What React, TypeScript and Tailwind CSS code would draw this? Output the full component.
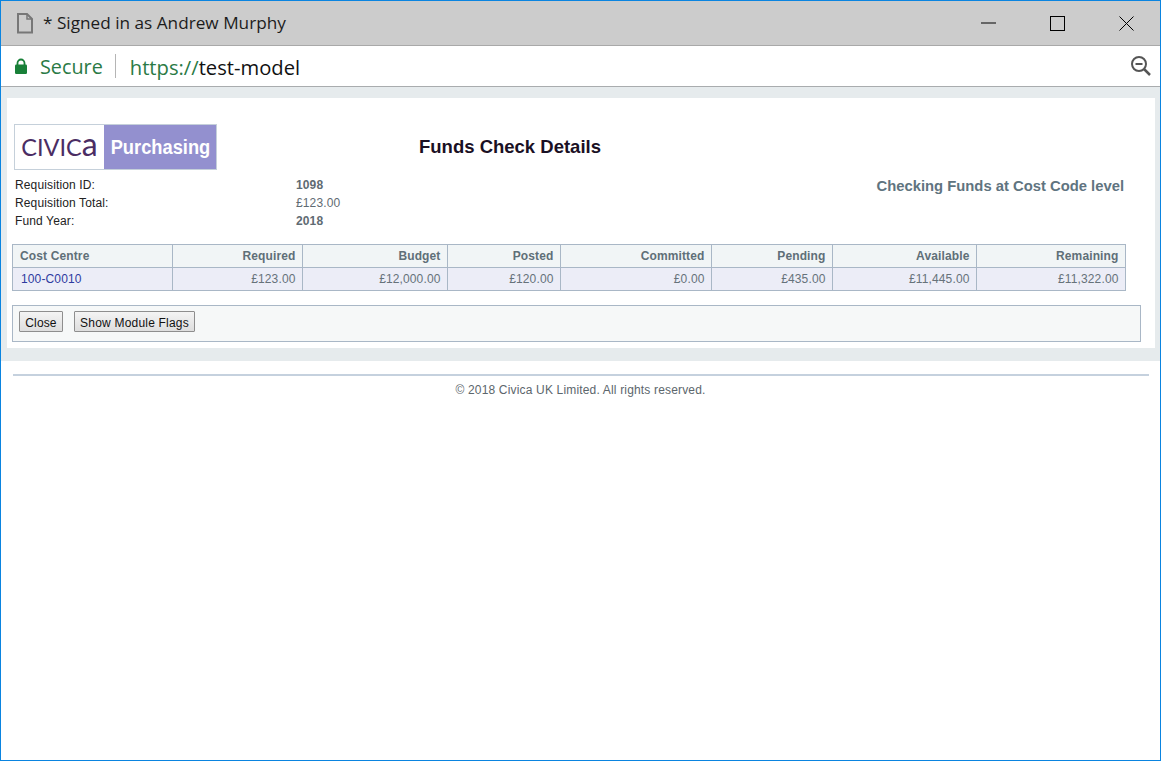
const sys = "font-['Open_Sans','Noto_Sans',sans-serif]";
const cols = [
  { w: 'w-[159px]', h: 'Cost Centre', v: '100-C0010', left: true },
  { w: 'w-[130px]', h: 'Required', v: '£123.00' },
  { w: 'w-[145px]', h: 'Budget', v: '£12,000.00' },
  { w: 'w-[113px]', h: 'Posted', v: '£120.00' },
  { w: 'w-[151px]', h: 'Committed', v: '£0.00' },
  { w: 'w-[121px]', h: 'Pending', v: '£435.00' },
  { w: 'w-[144px]', h: 'Available', v: '£11,445.00' },
  { w: 'w-[149px]', h: 'Remaining', v: '£11,322.00' },
];

function Row({ label, value, bold }: { label: string; value: string; bold?: boolean }) {
  return (
    <div className="flex h-[18px] items-center">
      <span className="w-[281px] text-[#222]">{label}</span>
      <span className={bold ? 'font-bold text-[#5f6b73]' : 'text-[#5f6b73]'}>{value}</span>
    </div>
  );
}

export default function App() {
  return (
    <div className="flex h-[761px] w-[1161px] flex-col overflow-hidden border border-[#0a84e0] bg-white font-['Liberation_Sans',Arial,sans-serif] text-[12px] tracking-[0.13px]">
      <div className="flex h-[45px] shrink-0 items-center border-b border-[#a9a9a9] bg-[#cccccc] tracking-normal">
        <svg width="18" height="22" viewBox="0 0 18 22" fill="none" stroke="#777" strokeWidth="2" className="ml-[15px]">
          <path d="M2 2h9l5 5v13.500H2z" />
          <path d="M11 2v5h5" strokeWidth="1.500" />
        </svg>
        <span className={`ml-[9px] text-[17.2px] text-[#1c1c1c] ${sys}`}>* Signed in as Andrew Murphy</span>
        <div className="ml-auto flex items-center">
          <svg width="15" height="2" className="mr-[54px]"><path d="M0 1h15" stroke="#000" strokeWidth="1" /></svg>
          <svg width="15" height="15" className="mr-[54px]"><rect x="0.500" y="0.500" width="14" height="14" fill="none" stroke="#000" /></svg>
          <svg width="15" height="15" className="mr-[26px]"><path d="M0.500 0.500l14 14M14.500 0.500l-14 14" stroke="#000" /></svg>
        </div>
      </div>

      <div className="flex h-[41px] shrink-0 items-center border-b border-[#a9acae] bg-white tracking-normal">
        <svg width="14" height="17" viewBox="0 0 14 17" className="ml-[13px]">
          <path d="M3.500 7V5a3.500 3.500 0 0 1 7 0v2" fill="none" stroke="#188038" strokeWidth="1.800" />
          <rect x="1" y="6.500" width="12" height="9.500" rx="1.200" fill="#188038" />
        </svg>
        <span className={`ml-[12px] pt-[2px] text-[19.8px] text-[#2a7a45] ${sys}`}>Secure</span>
        <div className="ml-[12px] h-[24px] w-px bg-[#b5b5b5]" />
        <span className={`ml-[14px] pt-[2px] text-[20.2px] ${sys}`}>
          <span className="text-[#2a7a45]">https://</span>
          <span className="text-[#111]">test-model</span>
        </span>
        <svg width="22" height="22" viewBox="0 0 22 22" fill="none" stroke="#555" className="ml-auto mr-[8px]">
          <circle cx="9" cy="9" r="7" strokeWidth="2" />
          <path d="M5.500 9h7" strokeWidth="2" />
          <path d="M14 14l6 6" strokeWidth="2.500" />
        </svg>
      </div>

      <div className="h-[274px] shrink-0 bg-[#e6ebed] pl-[6px] pt-[11px] pr-[5px]">
        <div className="h-[250px] bg-white pl-[5px] pr-[14px] pt-[26px]">
          <div className="relative flex h-[46px] items-start pl-[2px]">
            <div className="flex h-[46px] w-[203px] border border-[#c5d0da]">
              <div className="flex w-[89px] items-baseline justify-center bg-white pt-[5px] font-['Lato',sans-serif] text-[23.5px] leading-[28px] tracking-normal text-[#4b2d63]">
                CIVIC<span className="text-[32px] leading-[28px]">a</span>
              </div>
              <div className="flex flex-1 items-center justify-center bg-[#9390cf] text-[20px] font-bold tracking-normal text-white">
                <span className="scale-x-[0.915]">Purchasing</span>
              </div>
            </div>
            <div className="absolute left-[407px] top-[9px] text-[18.5px] font-bold tracking-normal text-[#1a1024]">Funds Check Details</div>
          </div>

          <div className="mt-[6px] flex pl-[3px]">
            <div className="flex-1">
              <Row label="Requisition ID:" value="1098" bold />
              <Row label="Requisition Total:" value="£123.00" />
              <Row label="Fund Year:" value="2018" bold />
            </div>
            <div className="mr-[17px] text-[14.8px] font-bold leading-[20px] tracking-normal text-[#5f7480]">Checking Funds at Cost Code level</div>
          </div>

          <div className="mt-[14px] w-[1114px] border border-[#a9b7c6]">
            <div className="flex h-[23px] border-b border-[#a9b7c6] bg-[#f1f5f6]">
              {cols.map((c, i) => (
                <div key={c.h} className={`${c.w} flex items-center border-[#a9b7c6] px-[6.500px] font-bold text-[#5f6f78] ${i ? 'justify-end border-l' : 'justify-start pl-[7px]'}`}>
                  {c.h}
                </div>
              ))}
            </div>
            <div className="flex h-[22px] bg-[#ecedf7]">
              {cols.map((c, i) => (
                <div key={c.h} className={`${c.w} flex items-center border-[#a9b7c6] px-[6.500px] ${i ? 'justify-end border-l text-[#66727a]' : 'justify-start pl-[8px] text-[#2e3aa0]'}`}>
                  {c.v}
                </div>
              ))}
            </div>
          </div>

          <div className="mt-[14px] flex h-[37px] w-[1129px] items-start border border-[#a9b7c6] bg-[#f6f8f8] pl-[6px] pt-[5px]">
            <button className="h-[21px] w-[44px] rounded-[1px] border border-[#8e8e8e] bg-gradient-to-b from-[#f4f4f4] to-[#dedede] pt-[2px] text-[12px] text-[#111]">Close</button>
            <button className="ml-[11px] h-[21px] w-[121px] rounded-[1px] border border-[#8e8e8e] bg-gradient-to-b from-[#f4f4f4] to-[#dedede] pt-[2px] text-[12px] tracking-[0.2px] text-[#111]">Show Module Flags</button>
          </div>
        </div>
      </div>

      <div className="ml-[12px] mr-[11px] mt-[13px] h-[2px] shrink-0 bg-[#c5d1de]" />
      <div className="mt-[5px] text-center text-[12px] tracking-[0.17px] text-[#5c666c]">© 2018 Civica UK Limited. All rights reserved.</div>
    </div>
  );
}
